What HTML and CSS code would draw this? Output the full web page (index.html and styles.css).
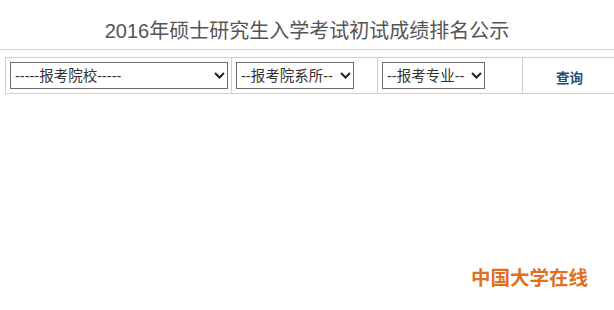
FILE: index.html
```html
<!DOCTYPE html>
<html lang="zh-CN">
<head>
<meta charset="utf-8">
<title>2016年硕士研究生入学考试初试成绩排名公示</title>
<link rel="stylesheet" href="styles.css">
</head>
<body>
<div class="page">
  <h1 class="title">2016年硕士研究生入学考试初试成绩排名公示</h1>
  <table class="query">
    <tr>
      <td class="c1">
        <span class="sel w1">
          <select><option>-----报考院校-----</option></select>
          <svg class="arrow" width="11" height="7" viewBox="0 0 11 7"><path d="M1 1 L5.5 5.5 L10 1" fill="none" stroke="#222" stroke-width="2"/></svg>
        </span>
      </td>
      <td class="c2">
        <span class="sel w2">
          <select><option>--报考院系所--</option></select>
          <svg class="arrow" width="11" height="7" viewBox="0 0 11 7"><path d="M1 1 L5.5 5.5 L10 1" fill="none" stroke="#222" stroke-width="2"/></svg>
        </span>
      </td>
      <td class="c3">
        <span class="sel w3">
          <select><option>--报考专业--</option></select>
          <svg class="arrow" width="11" height="7" viewBox="0 0 11 7"><path d="M1 1 L5.5 5.5 L10 1" fill="none" stroke="#222" stroke-width="2"/></svg>
        </span>
      </td>
      <td class="c4"><a class="btn">查询</a></td>
    </tr>
  </table>
  <div class="mark">中国大学在线</div>
</div>
</body>
</html>
```
FILE: styles.css
```css
html, body {
  margin: 0;
  padding: 0;
  background: #ffffff;
  overflow: hidden;
}
body {
  font-family: "Liberation Sans", "Noto Sans CJK SC", sans-serif;
  color: #333;
}
.page {
  position: relative;
  width: 614px;
  height: 310px;
}
.title {
  margin: 0;
  height: 50px;
  box-sizing: border-box;
  padding-top: 19px;
  font-size: 20px;
  line-height: 24px;
  font-weight: normal;
  color: #555;
  text-align: center;
  border-bottom: 1px solid #d2d2d2;
}
.query {
  margin: 7px 0 0 5px;
  width: 612px;
  border-collapse: collapse;
  table-layout: fixed;
}
.query td {
  border: 1px solid #c3d2dc;
  padding: 4px 0 4px 4px;
  height: 27px;
  vertical-align: middle;
}
.c1 { width: 221px; }
.c2 { width: 141px; }
.c3 { width: 140px; }
.c4 { text-align: center; padding-left: 0 !important; }
.sel {
  position: relative;
  display: block;
  height: 27px;
}
.w1 { width: 218px; }
.w2 { width: 118px; }
.w3 { width: 103px; }
.sel select {
  appearance: none;
  -webkit-appearance: none;
  display: block;
  width: 100%;
  height: 27px;
  margin: 0;
  box-sizing: border-box;
  border: 1px solid #6e6e6e;
  border-radius: 0;
  background: #fff;
  padding: 0 0 0 4px;
  font-family: "Liberation Sans", "Noto Sans CJK SC", sans-serif;
  font-size: 14.5px;
  color: #333;
}
.arrow {
  position: absolute;
  right: 3px;
  top: 10px;
  pointer-events: none;
}
.btn {
  font-size: 13.5px;
  font-weight: bold;
  color: #1f4f7c;
  text-decoration: none;
  position: relative;
  top: 1px;
}
.mark {
  position: absolute;
  left: 471px;
  top: 265px;
  font-size: 19.5px;
  font-weight: bold;
  color: #e0701e;
  line-height: 24px;
  font-family: "Noto Sans CJK SC", sans-serif;
}
```
